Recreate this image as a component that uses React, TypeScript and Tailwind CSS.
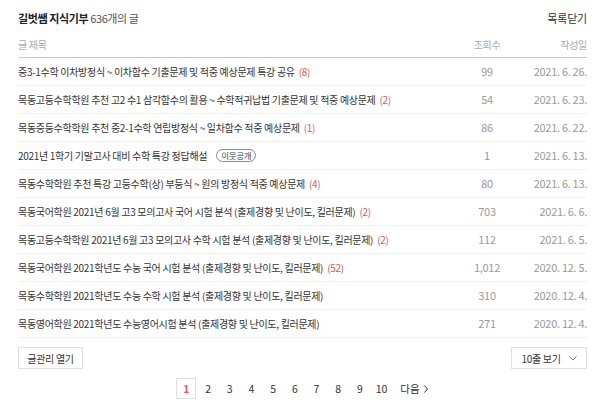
import React from "react";

const rows: { title: string; c?: number; badge?: string; v: string; d: string }[] = [
  { title: "중3-1수학 이차방정식 ~ 이차함수 기출문제 및 적중 예상문제 특강 공유", c: 8, v: "99", d: "2021. 6. 26." },
  { title: "목동고등수학학원 추천 고2 수1 삼각함수의 활용 ~ 수학적귀납법 기출문제 및 적중 예상문제", c: 2, v: "54", d: "2021. 6. 23." },
  { title: "목동중등수학학원 추천 중2-1수학 연립방정식 ~ 일차함수 적중 예상문제", c: 1, v: "86", d: "2021. 6. 22." },
  { title: "2021년 1학기 기말고사 대비 수학 특강 정답해설", badge: "이웃공개", v: "1", d: "2021. 6. 13." },
  { title: "목동수학학원 추천 특강 고등수학(상) 부등식 ~ 원의 방정식 적중 예상문제", c: 4, v: "80", d: "2021. 6. 13." },
  { title: "목동국어학원 2021년 6월 고3 모의고사 국어 시험 분석 (출제경향 및 난이도, 킬러문제)", c: 2, v: "703", d: "2021. 6. 6." },
  { title: "목동고등수학학원 2021년 6월 고3 모의고사 수학 시험 분석 (출제경향 및 난이도, 킬러문제)", c: 2, v: "112", d: "2021. 6. 5." },
  { title: "목동국어학원 2021학년도 수능 국어 시험 분석 (출제경향 및 난이도, 킬러문제)", c: 52, v: "1,012", d: "2020. 12. 5." },
  { title: "목동수학학원 2021학년도 수능 수학 시험 분석 (출제경향 및 난이도, 킬러문제)", v: "310", d: "2020. 12. 4." },
  { title: "목동영어학원 2021학년도 수능영어시험 분석 (출제경향 및 난이도, 킬러문제)", v: "271", d: "2020. 12. 4." },
];

export default function App() {
  return (
    <div
      className="w-[600px] h-[400px] bg-white pl-[18px] pr-[13px] pt-[10px] overflow-hidden"
      style={{ fontFamily: '"Noto Sans CJK KR", "Noto Sans", sans-serif' }}
    >
      <div className="flex items-center justify-between h-[17px]">
        <div className="text-[11px] text-[#222] tracking-[-0.4px]">
          <span className="font-bold">길벗쌤 지식기부</span>{" "}
          <span className="text-[#555]">636개의 글</span>
        </div>
        <div className="text-[11px] text-[#333] tracking-[-0.2px]">목록닫기</div>
      </div>

      <div className="mt-[4px] flex items-center h-[27px] border-b border-[#c8c8c8] text-[10px] text-[#aaa] tracking-[-0.3px]">
        <div className="flex-1">글 제목</div>
        <div className="w-[60px] text-center">조회수</div>
        <div className="w-[70px] text-right">작성일</div>
      </div>

      {rows.map((r, i) => (
        <div
          key={i}
          className="flex items-center h-[28px] border-b border-[#eeeeee] text-[10px] tracking-[-0.3px]"
        >
          <div className="flex-1 flex items-center text-[#333] whitespace-nowrap overflow-hidden">
            <span>{r.title}</span>
            {r.c !== undefined && <span className="ml-[4px] text-[#e2595a]">({r.c})</span>}
            {r.badge && (
              <span className="ml-[9px] h-[13px] px-[4px] rounded-full border border-[#888] text-[8.5px] leading-[11px] text-[#444] flex items-center">
                {r.badge}
              </span>
            )}
          </div>
          <div className="w-[60px] text-center text-[#9a9a9a] text-[11px]">{r.v}</div>
          <div className="w-[70px] text-right text-[#9a9a9a] text-[11px]">{r.d}</div>
        </div>
      ))}

      <div className="mt-[9px] flex items-center justify-between">
        <div className="h-[22px] w-[65px] border border-[#e0e0e0] flex items-center justify-center text-[10px] text-[#333] tracking-[-0.3px]">
          글관리 열기
        </div>
        <div className="h-[22px] w-[76px] border border-[#e0e0e0] flex items-center justify-center gap-[8px] text-[10px] text-[#333] tracking-[-0.3px]">
          <span>10줄 보기</span>
          <svg width="8" height="5" viewBox="0 0 8 5" fill="none">
            <path d="M0.5 0.5 L4 4 L7.5 0.5" stroke="#777" strokeWidth="1" />
          </svg>
        </div>
      </div>

      <div className="mt-[9px] flex items-center justify-center gap-[1.7px] text-[10.5px] text-[#333] pr-[1px]">
        <div className="w-[20px] h-[21px] border border-[#e0e0e0] flex items-center justify-center text-[#e2595a] font-bold">
          1
        </div>
        {[2, 3, 4, 5, 6, 7, 8, 9, 10].map((n) => (
          <div key={n} className="w-[20px] h-[21px] flex items-center justify-center">
            {n}
          </div>
        ))}
        <div className="ml-[7px] h-[21px] flex items-center gap-[4px]">
          <span>다음</span>
          <svg width="4" height="8" viewBox="0 0 4 8" fill="none">
            <path d="M0.5 0.5 L3.5 4 L0.5 7.5" stroke="#333" strokeWidth="1" />
          </svg>
        </div>
      </div>
    </div>
  );
}
